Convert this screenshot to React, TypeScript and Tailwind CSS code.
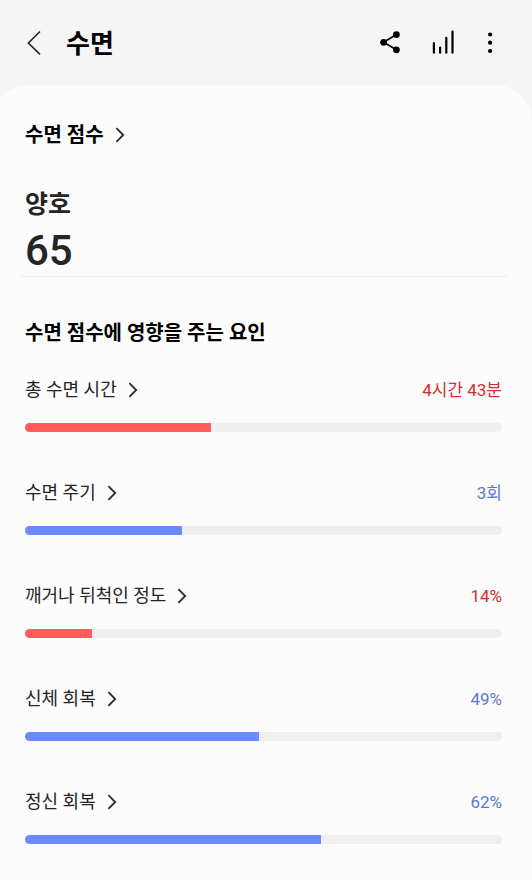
import React from 'react';

type Tone = 'red' | 'blue';

interface Factor {
  id: string;
  label: string;
  value: string;
  percent: number;
  tone: Tone;
}

const factors: Factor[] = [
  { id: 'total', label: '총 수면 시간', value: '4시간 43분', percent: 39, tone: 'red' },
  { id: 'cycle', label: '수면 주기', value: '3회', percent: 33, tone: 'blue' },
  { id: 'awake', label: '깨거나 뒤척인 정도', value: '14%', percent: 14, tone: 'red' },
  { id: 'physical', label: '신체 회복', value: '49%', percent: 49, tone: 'blue' },
  { id: 'mental', label: '정신 회복', value: '62%', percent: 62, tone: 'blue' }
];

const barColors: Record<Tone, string> = {
  red: 'bg-[#ff5c5c]',
  blue: 'bg-[#6b8afd]'
};

const textColors: Record<Tone, string> = {
  red: 'text-[#d92c2c]',
  blue: 'text-[#5f76d3]'
};

const ChevronIcon = () => (
  <svg className="h-4 w-[10px] shrink-0" viewBox="0 0 10 16" fill="none" stroke="#2a2a2a" strokeWidth="1.8" aria-hidden="true">
    <path d="M1.4 1.2 8.2 8l-6.8 6.8" />
  </svg>
);

const Header = () => (
  <header className="flex items-center justify-between pt-[22px] pr-9 pb-[23px] pl-[22px]">
    <div className="flex items-center gap-5">
      <button type="button" aria-label="뒤로">
        <svg className="block h-7 w-6" viewBox="0 0 24 28" fill="none" stroke="#2a2a2a" strokeWidth="1.7">
          <path d="M18 3.5 6.4 15 18 26.4" />
        </svg>
      </button>
      <h1 className="pt-1 text-[26px] leading-9 font-bold text-black">수면</h1>
    </div>

    <div className="flex items-center gap-[29px]">
      <button type="button" aria-label="공유">
        <svg className="block size-6" viewBox="0 0 24 24" fill="#000" stroke="#000">
          <path d="M18.4 4.6 5.6 12.3l12.8 7.5" fill="none" strokeWidth="1.8" />
          <circle cx="18.4" cy="4.6" r="3.4" stroke="none" />
          <circle cx="5.6" cy="12.3" r="3.4" stroke="none" />
          <circle cx="18.4" cy="19.8" r="3.4" stroke="none" />
        </svg>
      </button>
      <button type="button" aria-label="통계">
        <svg className="block size-6" viewBox="0 0 24 24" fill="none" stroke="#000" strokeWidth="2.2" strokeLinecap="round">
          <path d="M2.9 13.2v9.5M9.1 17.6v5.1M15.3 7.8v14.9M21.5 1.6v21.1" />
        </svg>
      </button>
      <button type="button" aria-label="더보기">
        <svg className="block h-6 w-3" viewBox="0 0 12 24" fill="#000">
          <circle cx="6.1" cy="4.5" r="2.1" />
          <circle cx="6.1" cy="12.7" r="2.1" />
          <circle cx="6.1" cy="21" r="2.1" />
        </svg>
      </button>
    </div>
  </header>
);

const FactorRow: React.FC<{ factor: Factor }> = ({ factor }) => (
  <li>
    <div className="flex items-center justify-between">
      <button type="button" className="flex items-center gap-[11px] text-lg leading-6 text-[#252525]">
        <span id={factor.id}>{factor.label}</span>
        <ChevronIcon />
      </button>
      <span className={`text-[17px] leading-6 ${textColors[factor.tone]}`}>{factor.value}</span>
    </div>
    <div
      role="progressbar"
      aria-labelledby={factor.id}
      aria-valuenow={factor.percent}
      aria-valuemin={0}
      aria-valuemax={100}
      className="mt-[21px] h-[9px] overflow-hidden rounded-full bg-[#efefef]"
    >
      <div className={`h-full ${barColors[factor.tone]}`} style={{ width: `${factor.percent}%` }} />
    </div>
  </li>
);

export default function App() {
  return (
    <div className="flex min-h-screen flex-col overflow-hidden bg-[#f5f5f5] font-[Roboto,'Noto_Sans_CJK_KR',sans-serif]">
      <Header />

      <main className="-ml-2 grow rounded-t-[36px] bg-[#fcfcfc] pt-9 pr-[30px] pb-8 pl-[33px]">
        <section>
          <h2 className="text-xl leading-7 font-bold text-black">
            <button type="button" className="flex items-center gap-[11px]">
              수면 점수
              <ChevronIcon />
            </button>
          </h2>
          <p className="mt-[38px] text-[25px] leading-9 font-semibold text-[#252525]">양호</p>
          <p className="mt-[3px] text-[42px] leading-[50px] font-medium text-[#252525]">65</p>
        </section>

        <hr className="-mr-[6px] -ml-[5px] border-[#efefef]" />

        <section className="mt-[42px]">
          <h2 className="text-xl leading-7 font-bold text-black">수면 점수에 영향을 주는 요인</h2>
          <ul className="mt-[31px] flex flex-col gap-[49px]">
            {factors.map(factor => (
              <FactorRow key={factor.id} factor={factor} />
            ))}
          </ul>
        </section>
      </main>
    </div>
  );
}
